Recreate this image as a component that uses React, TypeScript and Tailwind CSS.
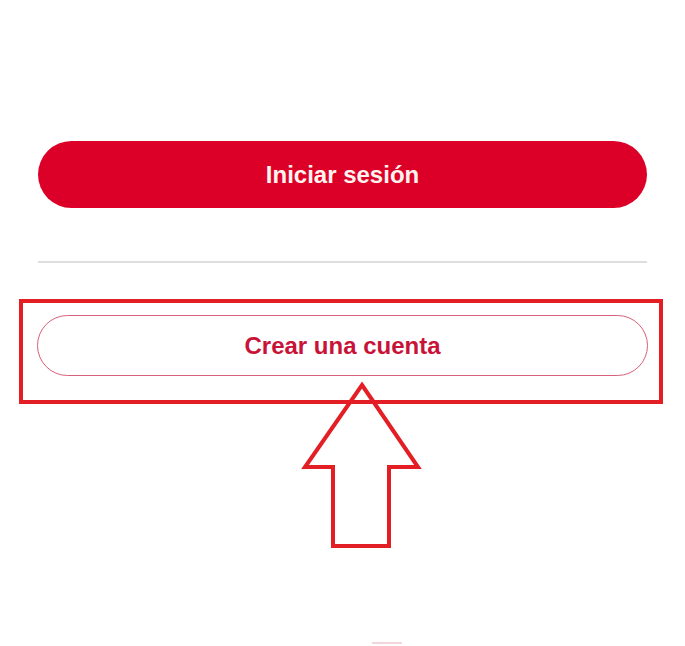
import React from 'react';

const FONT = "'Liberation Sans', Arial, sans-serif";

function UpArrow() {
  return (
    <svg width="130" height="175" viewBox="0 0 130 175" className="absolute left-[297px] top-[378px]">
      <polygon
        points="65,7 121,89 92,89 92,168 36,168 36,89 8,89"
        fill="none"
        stroke="#E31E24"
        strokeWidth="4"
        strokeLinejoin="miter"
      />
    </svg>
  );
}

export default function App() {
  return (
    <div className="relative h-[646px] w-[685px] overflow-hidden bg-white" style={{ fontFamily: FONT }}>
      <div className="flex flex-col px-[38px] pt-[141px]">
        <button className="flex h-[67px] w-full items-center justify-center rounded-full bg-[#DC0028] text-[24px] font-bold text-[#FFF4EE]">
          Iniciar sesión
        </button>

        <div className="mt-[53px] h-[2px] w-full bg-[#DEDEDE]" />

        <button className="mt-[52px] flex h-[61px] w-[611px] -ml-[1px] items-center justify-center rounded-full border border-[#D9607A] bg-white text-[24px] font-bold text-[#C81339]">
          Crear una cuenta
        </button>
      </div>

      {/* annotation overlay */}
      <div className="absolute left-[19px] top-[299px] h-[105px] w-[644px] border-[4px] border-[#E31E24]" />
      <UpArrow />
      <div className="absolute left-[372px] top-[642px] h-[2px] w-[30px] bg-[#F3D6DC]" />
    </div>
  );
}
